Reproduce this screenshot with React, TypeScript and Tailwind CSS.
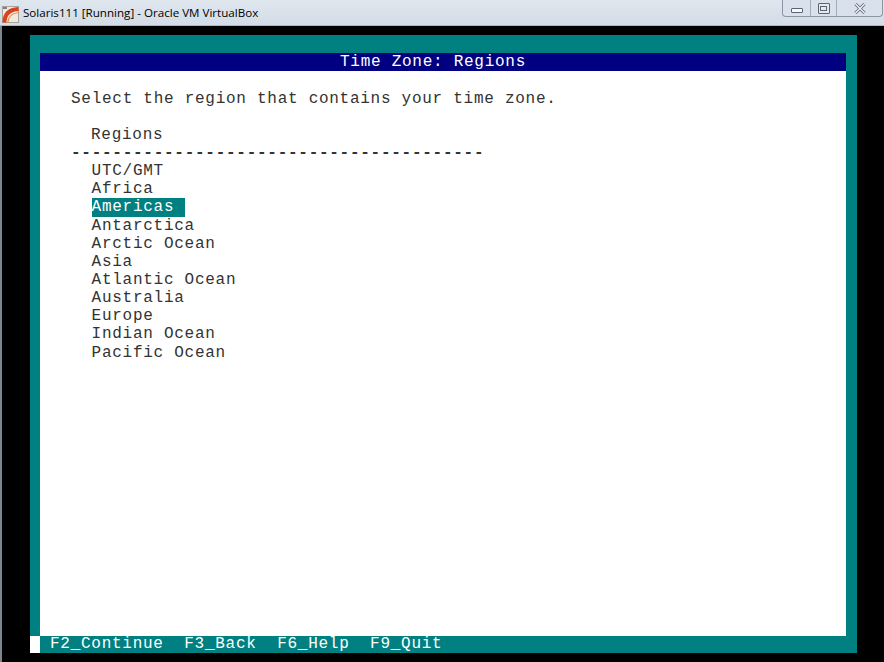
const regions = [
  "UTC/GMT",
  "Africa",
  "Americas",
  "Antarctica",
  "Arctic Ocean",
  "Asia",
  "Atlantic Ocean",
  "Australia",
  "Europe",
  "Indian Ocean",
  "Pacific Ocean",
];

const shortcuts = ["F2_Continue", "F3_Back", "F6_Help", "F9_Quit"];

// one terminal row, all rows share the same height
const rowClass = "h-[18.15px] leading-[18.15px] whitespace-pre";

const VBoxIcon = () => (
  <svg width="17" height="17" viewBox="0 0 17 17" className="mt-[3px] shrink-0">
    <rect x="0.5" y="0.5" width="16" height="16" fill="#efe9e2" stroke="#a8a49c" />
    <path d="M2.5 16.5 C2.5 8 7 3.5 16.5 3" fill="none" stroke="#d8431f" strokeWidth="4" />
    <path d="M6 16.5 C6 11 9.5 7.5 16.5 6.5" fill="none" stroke="#f08a3c" strokeWidth="1.2" />
    <rect x="1" y="1" width="4" height="2" fill="#7d8088" />
  </svg>
);

const WindowButtons = () => (
  <div className="flex h-[17px] self-start rounded-b-[4px] border-x border-b border-[#8b95a3] bg-[#d8e1ec]">
    <div className="flex w-[28px] items-center justify-center border-r border-[#a3adba]">
      <div className="mt-[4px] h-[5px] w-[12px] rounded-[1px] border border-[#5c6470] bg-[#f6f8fa]" />
    </div>
    <div className="flex w-[26px] items-center justify-center border-r border-[#a3adba]">
      <div className="flex h-[11px] w-[12px] items-center justify-center rounded-[1px] border border-[#5c6470] bg-[#e4e9ef]">
        <div className="h-[5px] w-[7px] border border-[#5c6470]" />
      </div>
    </div>
    <div className="flex w-[45px] items-center justify-center">
      <svg width="12" height="11" viewBox="0 0 12 11">
        <path d="M1.5 1 L10.5 10 M10.5 1 L1.5 10" stroke="#5c6470" strokeWidth="3" />
        <path d="M1.5 1 L10.5 10 M10.5 1 L1.5 10" stroke="#f2f4f7" strokeWidth="1.4" />
      </svg>
    </div>
  </div>
);

export default function App() {
  return (
    <div className="flex h-[662px] w-[884px] flex-col overflow-hidden bg-black">
      {/* window title bar */}
      <div className="flex h-[26px] shrink-0 justify-between border-b border-[#aeb6bf] bg-gradient-to-b from-[#dfe6ee] to-[#d3dce7] pr-[1px]">
        <div className="flex items-center gap-[4px] pl-[2px]">
          <VBoxIcon />
          <span className="font-['Open_Sans',sans-serif] text-[11.6px] text-black">
            Solaris111 [Running] - Oracle VM VirtualBox
          </span>
        </div>
        <WindowButtons />
      </div>

      {/* guest screen */}
      <div className="flex flex-1 border-l-2 border-[#7d8790] pl-[28px] pt-[9px]">
        <div className="flex h-[618px] w-[827px] flex-col bg-[#008080] pl-[10px] pr-[11px] pt-[18px] font-['Liberation_Mono',monospace] text-[16px] tracking-[0.73px]">
          <div className="h-[18px] bg-[#000080] pl-[300px] leading-[18px] text-white">
            Time Zone: Regions
          </div>
          <div className="flex-1 bg-white pl-[31px] pt-[18.6px] text-[#333]">
            <div className={rowClass}>Select the region that contains your time zone.</div>
            <div className={rowClass}> </div>
            <div className={`${rowClass} pl-[20px]`}>Regions</div>
            <div className={`${rowClass} font-bold`}>{"-".repeat(40)}</div>
            {regions.map((r) => (
              <div key={r} className={`${rowClass} pl-[20.6px]`}>
                {r === "Americas" ? (
                  <span className="inline-block w-[93px] bg-[#008080] text-white">{r}</span>
                ) : (
                  r
                )}
              </div>
            ))}
          </div>
          <div className="-ml-[10px] flex h-[17px] shrink-0">
            <div className="w-[10px] bg-white" />
            <div className="flex gap-[20.6px] pl-[10px] leading-[17px] text-white">
              {shortcuts.map((s) => (
                <span key={s}>{s}</span>
              ))}
            </div>
          </div>
        </div>
      </div>
    </div>
  );
}
